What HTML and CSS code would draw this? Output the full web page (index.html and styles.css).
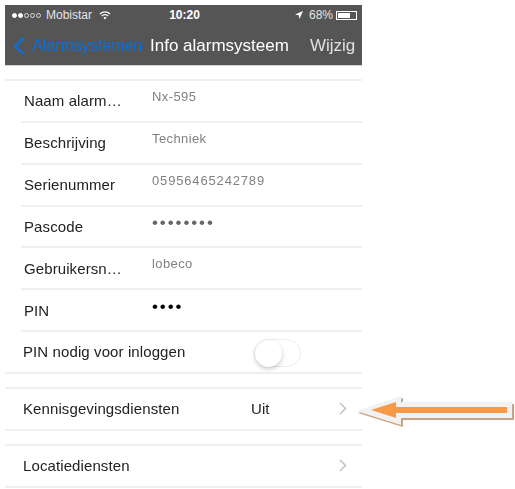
FILE: index.html
```html
<!DOCTYPE html>
<html lang="en">
<head>
    <meta charset="UTF-8">
    <meta name="viewport" content="width=device-width, initial-scale=1.0">
    <title>Info alarmsysteem</title>
    <link rel="stylesheet" href="styles.css">
</head>
<body>
    <div class="phone">
        <div class="topbar">
            <div class="status">
                <div class="status-left">
                    <span class="signal"><i class="on"></i><i class="on"></i><i></i><i></i><i></i></span>
                    <span>Mobistar</span>
                    <svg class="wifi" width="12" height="9" viewBox="0 0 12 9">
                        <path d="M1 3 A7 7 0 0 1 11 3" />
                        <path d="M2.8 5 A4.5 4.5 0 0 1 9.2 5" />
                        <path d="M6 8.5 L4.4 6.8 A2.4 2.4 0 0 1 7.6 6.8 Z" class="wifi-dot" />
                    </svg>
                </div>
                <div class="status-time">10:20</div>
                <div class="status-right">
                    <svg class="location" width="8" height="8" viewBox="0 0 8 8"><path d="M8 0 L0 3.6 L3.7 4.3 L4.4 8 Z" fill="#fff" /></svg>
                    <span>68%</span>
                    <span class="battery"><span class="battery-fill"></span></span>
                </div>
            </div>
            <div class="nav">
                <div class="nav-back">
                    <svg width="12" height="18" viewBox="0 0 12 18"><path d="M10.5 1 L2 9 L10.5 17" /></svg>
                    <span>Alarmsystemen</span>
                </div>
                <div class="nav-title">Info alarmsysteem</div>
                <div class="nav-edit">Wijzig</div>
            </div>
        </div>

        <div class="group group-info">
            <div class="row"><span class="label">Naam alarm…</span><span class="value">Nx-595</span></div>
            <div class="row"><span class="label">Beschrijving</span><span class="value">Techniek</span></div>
            <div class="row"><span class="label">Serienummer</span><span class="value value-num">05956465242789</span></div>
            <div class="row"><span class="label">Pascode</span><span class="value dots">••••••••</span></div>
            <div class="row"><span class="label">Gebruikersn…</span><span class="value">lobeco</span></div>
            <div class="row"><span class="label">PIN</span><span class="value dots dots-dark">••••</span></div>
            <div class="row row-wide">
                <span class="label">PIN nodig voor inloggen</span>
                <span class="switch"><span class="knob"></span></span>
            </div>
        </div>

        <div class="group group-link">
            <div class="row row-wide row-link">
                <span class="label">Kennisgevingsdiensten</span>
                <span class="state">Uit</span>
                <svg class="chevron" width="8" height="13" viewBox="0 0 8 13"><path d="M1 1 L6.5 6.5 L1 12" /></svg>
            </div>
        </div>

        <div class="group group-link">
            <div class="row row-wide row-link">
                <span class="label">Locatiediensten</span>
                <span class="state"></span>
                <svg class="chevron" width="8" height="13" viewBox="0 0 8 13"><path d="M1 1 L6.5 6.5 L1 12" /></svg>
            </div>
        </div>
    </div>

    <svg class="arrow" width="164" height="36" viewBox="354 394 164 36">
        <polygon points="356,411 401,396 401,402 512,402 512,418 401,418 401,425" fill="#c9a282" transform="translate(2 2)" />
        <polygon points="356,411 401,396 401,402 512,402 512,418 401,418 401,425" fill="#f2f2f2" />
        <polygon points="371,410 396,402 396,407 507,407 507,413 396,413 396,418" fill="#f79a48" />
    </svg>
</body>
</html>
```

FILE: styles.css
```css
html, body {
    margin: 0;
    padding: 0;
    background-color: #ffffff;
}
body {
    font-family: "Liberation Sans", Arial, sans-serif;
    height: 489px;
    overflow: hidden;
    position: relative;
}
.phone {
    width: 357px;
    margin-left: 5px;
    padding-top: 5px;
    filter: blur(0.5px);
}
.topbar {
    height: 60px;
    background-color: #555555;
    color: #ffffff;
    border-bottom: 1px solid #d0d0d0;
}
.status {
    height: 20px;
    display: grid;
    grid-template-columns: 1fr auto 1fr;
    align-items: center;
    padding: 0 5px 0 7px;
    font-size: 12px;
    color: #e4e4e4;
}
.status-left {
    display: flex;
    align-items: center;
    gap: 5px;
}
.signal {
    display: flex;
    gap: 1px;
}
.signal i {
    width: 5px;
    height: 5px;
    box-sizing: border-box;
    border: 1px solid #d8d8d8;
    border-radius: 50%;
}
.signal i.on {
    background-color: #ffffff;
    border-color: #ffffff;
}
.wifi {
    margin-left: 2px;
}
.wifi path {
    fill: none;
    stroke: #ffffff;
    stroke-width: 1.2;
}
.wifi .wifi-dot {
    fill: #ffffff;
    stroke: none;
}
.status-time {
    font-size: 12px;
    font-weight: bold;
    color: #ffffff;
}
.status-right {
    display: flex;
    justify-content: flex-end;
    align-items: center;
    gap: 3px;
}
.location {
    margin-right: 3px;
}
.battery {
    width: 21px;
    height: 9px;
    box-sizing: border-box;
    border: 1px solid #ffffff;
    padding: 1px;
    position: relative;
    display: block;
}
.battery-fill {
    display: block;
    width: 68%;
    height: 100%;
    background-color: #ffffff;
}
.nav {
    height: 40px;
    display: flex;
    align-items: center;
    padding: 1px 0 0 8px;
    box-sizing: border-box;
    font-size: 17px;
}
.nav-back {
    display: flex;
    align-items: center;
    gap: 7px;
    width: 137px;
    font-size: 16px;
    color: #0a6fe0;
    white-space: nowrap;
}
.nav-back path {
    fill: none;
    stroke: #0a6fe0;
    stroke-width: 2.4;
}
.nav-title {
    color: #ffffff;
    margin-right: 21px;
    white-space: nowrap;
}
.nav-edit {
    color: #e0e0e0;
}
.group {
    border-top: 2px solid #efefef;
}
.group-info {
    margin-top: 13px;
}
.group-link {
    margin-top: 13px;
}
.row {
    height: 39.85px;
    margin-left: 16px;
    border-bottom: 2px solid #efefef;
    display: flex;
    align-items: center;
    font-size: 15px;
    letter-spacing: 0.1px;
    color: #222222;
    position: relative;
}
.label {
    width: 128px;
    padding-left: 3px;
    white-space: nowrap;
}
.value {
    font-size: 13px;
    color: #808080;
    letter-spacing: 0.4px;
    margin-top: -9px;
}
.value-num {
    letter-spacing: 0.84px;
}
.dots {
    letter-spacing: 1.9px;
    font-size: 17px;
    color: #666666;
    margin-top: -6px;
}
.dots-dark {
    color: #000000;
}
.row-wide {
    margin-left: 0;
    padding-left: 16px;
}
.row-wide .label {
    padding-left: 2px;
}
.switch {
    position: absolute;
    left: 249px;
    top: 7px;
    width: 47px;
    height: 28px;
    box-sizing: border-box;
    border: 1px solid #ececec;
    border-radius: 14px;
}
.knob {
    display: block;
    width: 27px;
    height: 27px;
    border-radius: 50%;
    background-color: #ffffff;
    box-shadow: 0 2px 4px rgba(0, 0, 0, 0.22);
}
.row-link {
    height: 40px;
}
.row-link .label {
    width: 228px;
}
.state {
    width: 88px;
    color: #222222;
}
.chevron path {
    fill: none;
    stroke: #c4c4c4;
    stroke-width: 1.6;
}
.arrow {
    position: absolute;
    left: 354px;
    top: 394px;
}
```
